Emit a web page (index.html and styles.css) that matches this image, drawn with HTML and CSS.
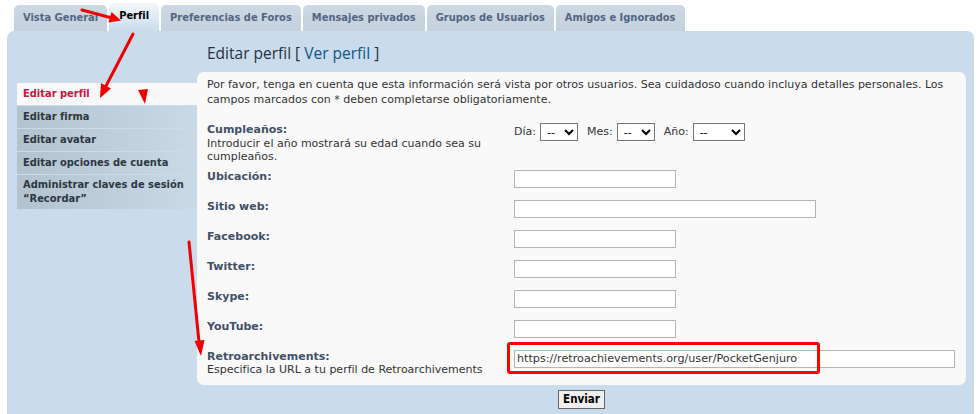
FILE: index.html
```html
<!DOCTYPE html>
<html lang="es">
<head>
    <meta charset="UTF-8">
    <meta name="viewport" content="width=device-width, initial-scale=1.0">
    <title>Panel de Control del Usuario - Editar perfil</title>
    <link rel="stylesheet" href="styles.css">
</head>
<body>

<div class="page">
    <ul class="tabs">
        <li class="tab"><a href="#">Vista General</a></li>
        <li class="tab active"><a href="#">Perfil</a></li>
        <li class="tab"><a href="#">Preferencias de Foros</a></li>
        <li class="tab"><a href="#">Mensajes privados</a></li>
        <li class="tab"><a href="#">Grupos de Usuarios</a></li>
        <li class="tab"><a href="#">Amigos e Ignorados</a></li>
    </ul>

    <div class="panel">
        <h2 class="panel-title">Editar perfil <span class="bracket">[</span> <a href="#">Ver perfil</a> <span class="bracket">]</span></h2>

        <ul class="side-nav">
            <li class="active"><a href="#">Editar perfil</a></li>
            <li><a href="#">Editar firma</a></li>
            <li><a href="#">Editar avatar</a></li>
            <li><a href="#">Editar opciones de cuenta</a></li>
            <li><a href="#">Administrar claves de sesión “Recordar”</a></li>
        </ul>

        <form class="content" action="#">
            <p class="intro">Por favor, tenga en cuenta que esta información será vista por otros usuarios. Sea cuidadoso cuando incluya detalles personales. Los campos marcados con * deben completarse obligatoriamente.</p>

            <dl class="row row-birthday">
                <dt>
                    <label>Cumpleaños:</label>
                    <span class="explain">Introducir el año mostrará su edad cuando sea su cumpleaños.</span>
                </dt>
                <dd class="dates">
                    <label>Día:</label>
                    <select class="sel-short"><option>--</option></select>
                    <label>Mes:</label>
                    <select class="sel-short"><option>--</option></select>
                    <label>Año:</label>
                    <select class="sel-year"><option>--</option></select>
                </dd>
            </dl>

            <dl class="row">
                <dt><label>Ubicación:</label></dt>
                <dd><input type="text" class="inputbox"></dd>
            </dl>
            <dl class="row">
                <dt><label>Sitio web:</label></dt>
                <dd><input type="text" class="inputbox wide"></dd>
            </dl>
            <dl class="row">
                <dt><label>Facebook:</label></dt>
                <dd><input type="text" class="inputbox"></dd>
            </dl>
            <dl class="row">
                <dt><label>Twitter:</label></dt>
                <dd><input type="text" class="inputbox"></dd>
            </dl>
            <dl class="row">
                <dt><label>Skype:</label></dt>
                <dd><input type="text" class="inputbox"></dd>
            </dl>
            <dl class="row">
                <dt><label>YouTube:</label></dt>
                <dd><input type="text" class="inputbox"></dd>
            </dl>
            <dl class="row row-last">
                <dt>
                    <label>Retroarchivements:</label>
                    <span class="explain">Especifica la URL a tu perfil de Retroarchivements</span>
                </dt>
                <dd class="marked">
                    <input type="text" class="inputbox full" value="https://retroachievements.org/user/PocketGenjuro">
                    <span class="highlight"></span>
                </dd>
            </dl>
        </form>

        <div class="submit-row">
            <button type="button" class="button">Enviar</button>
        </div>
    </div>

    <!-- red arrows drawn on top of the screenshot -->
    <svg class="annotations" width="979" height="414" viewBox="0 0 979 414">
        <g stroke="#f20000" stroke-width="3" stroke-linecap="round" fill="#f20000">
            <line x1="82" y1="10" x2="110" y2="17.5"/>
            <polygon points="121,20.5 108.5,22.5 111.5,12" stroke="none"/>

            <line x1="133" y1="34" x2="106" y2="86"/>
            <polygon points="100,98 101,83 111,88.5" stroke="none"/>

            <polygon points="138,90 148,89 145,104" stroke="none"/>

            <line x1="189" y1="242" x2="199" y2="342"/>
            <polygon points="201,356 194.5,341 204.5,340" stroke="none"/>
        </g>
    </svg>
</div>

</body>
</html>
```

FILE: styles.css
```css
body {
    margin: 0;
    background-color: #fff;
    font-family: "DejaVu Sans", Verdana, sans-serif;
    font-size: 11px;
    color: #333;
}

a {
    text-decoration: none;
}

.page {
    position: relative;
    width: 979px;
    height: 414px;
    overflow: hidden;
    padding-top: 3px;
    box-sizing: border-box;
}

/* tabs */
.tabs {
    display: flex;
    align-items: flex-end;
    gap: 2px;
    list-style: none;
    margin: 0;
    padding: 0 0 0 14px;
}

.tab {
    height: 26px;
    box-sizing: border-box;
    padding: 6px 9px 0;
    background: linear-gradient(#ccd8e3, #c5d2de);
    border-radius: 5px 5px 0 0;
    line-height: 14px;
    font-stretch: condensed;
}

.tab a {
    color: #536482;
    font-weight: bold;
    white-space: nowrap;
}

.tab.active {
    height: 28px;
    padding: 6px 10px 0;
    background: linear-gradient(#f2f7fb, #cadceb);
}

.tab.active a {
    color: #000;
}

/* main panel */
.panel {
    display: grid;
    grid-template-columns: 180px 1fr;
    grid-template-rows: auto auto 1fr;
    margin: 0 5px 0 7px;
    padding: 12px 8px 0 10px;
    height: 383px;
    box-sizing: border-box;
    background-color: #cadceb;
    border-radius: 7px 7px 0 0;
}

.panel-title {
    grid-column: 2;
    margin: 0 0 9px 10px;
    font-family: "Open Sans", sans-serif;
    font-size: 15.5px;
    font-weight: normal;
    line-height: 20px;
    color: #28313f;
}

.panel-title a {
    color: #105289;
}

.side-nav {
    grid-column: 1;
    align-self: start;
    list-style: none;
    margin: 11px 0 0;
    padding: 0;
    font-stretch: condensed;
}

.side-nav li {
    margin-bottom: 1px;
    padding: 4px 6px;
    line-height: 14px;
    background: linear-gradient(to right, #b3c2cf, #cad9e6);
}

.side-nav li:last-child {
    padding: 3px 6px;
}

.side-nav a {
    color: #2d3640;
    font-weight: bold;
}

.side-nav li.active {
    background: #f9f9f9;
}

.side-nav li.active a {
    color: #d31141;
}

/* form */
.content {
    grid-column: 2;
    align-self: start;
    margin: 0;
    padding: 5px 10px 8px;
    background-color: #f9f9f9;
    border-radius: 7px;
}

.intro {
    margin: 0 0 10px;
    line-height: 15px;
}

.row {
    display: flex;
    margin: 0;
    padding: 6px 0;
    line-height: 13.5px;
}

.row-birthday {
    padding-bottom: 0;
}

.row-last {
    padding-bottom: 0;
}

.row dt {
    width: 307px;
    flex-shrink: 0;
    padding-right: 10px;
    box-sizing: border-box;
}

.row dt label {
    display: block;
    font-weight: bold;
    color: #425067;
}

.explain {
    display: block;
}

.row dd {
    margin: 0;
}

.dates {
    display: flex;
    align-items: center;
    height: 18px;
}

.dates label {
    margin-right: 4px;
}

.dates select + label {
    margin-left: 9px;
}

.dates select {
    height: 18px;
    padding: 0 0 0 2px;
    font-family: inherit;
    font-size: 11px;
    color: #000;
    background-color: #fff;
    border: 1px solid #767676;
    border-radius: 0;
}

.sel-short {
    width: 38px;
}

.sel-year {
    width: 52px;
}

.inputbox {
    display: block;
    width: 162px;
    height: 18px;
    box-sizing: border-box;
    margin: 0;
    padding: 0 2px;
    font-family: inherit;
    font-size: 11px;
    color: #333;
    background-color: #fff;
    border: 1px solid #b4b4b4;
}

.inputbox.wide {
    width: 302px;
}

.inputbox.full {
    width: 441px;
    font-size: 11.2px;
}

.marked {
    position: relative;
}

.highlight {
    position: absolute;
    left: -7px;
    top: -8px;
    width: 313px;
    height: 32px;
    box-sizing: border-box;
    border: 3px solid #f00;
    border-radius: 3px;
}

.submit-row {
    grid-column: 2;
    align-self: start;
    display: flex;
    justify-content: center;
    padding-top: 5px;
}

.button {
    height: 19px;
    padding: 0 4px;
    font-family: inherit;
    font-stretch: condensed;
    font-size: 11.5px;
    font-weight: bold;
    color: #000;
    background-color: #efefef;
    border: 1px solid #666;
    border-radius: 0;
    line-height: 15px;
}

.annotations {
    position: absolute;
    top: 0;
    left: 0;
    pointer-events: none;
}
```
